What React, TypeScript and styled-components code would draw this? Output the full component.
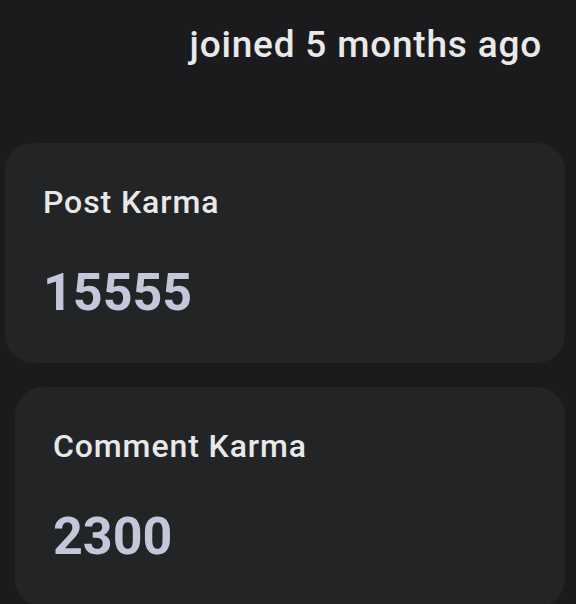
import styled, { createGlobalStyle } from "styled-components"

const GlobalStyle = createGlobalStyle`
  html, body {
    margin: 0;
    padding: 0;
    background: #1b1b1d;
    font-family: Roboto, "Noto Sans", sans-serif;
  }
`

const Page = styled.div`
  width: 576px;
  height: 604px;
  overflow: hidden;
  background: #1b1b1d;
  padding-top: 23px;
  box-sizing: border-box;
`

const Joined = styled.div`
  text-align: right;
  padding-right: 34px;
  font-size: 37px;
  line-height: 44px;
  font-weight: 500;
  letter-spacing: 0.8px;
  color: #e9e9ea;
`

const Cards = styled.div`
  display: flex;
  flex-direction: column;
  gap: 24px;
  margin-top: 76px;
`

const Card = styled.div<{ $indent: number }>`
  margin-left: ${(p) => p.$indent}px;
  margin-right: 11px;
  height: 220px;
  box-sizing: border-box;
  background: #232426;
  border-radius: 28px;
  padding: 40px 38px 0;
  display: flex;
  flex-direction: column;
  gap: 42px;
`

const Label = styled.div`
  font-size: 32px;
  line-height: 38px;
  font-weight: 500;
  letter-spacing: 0.9px;
  color: #e8e8e9;
`

const Value = styled.div`
  font-size: 52px;
  line-height: 60px;
  font-weight: 700;
  color: #c3c7d9;
`

const stats = [
  { label: "Post Karma", value: "15555", indent: 5 },
  { label: "Comment Karma", value: "2300", indent: 15 },
]

const App = () => {
  return (
    <Page>
      <GlobalStyle />
      <Joined>joined 5 months ago</Joined>
      <Cards>
        {stats.map((s) => (
          <Card key={s.label} $indent={s.indent}>
            <Label>{s.label}</Label>
            <Value>{s.value}</Value>
          </Card>
        ))}
      </Cards>
    </Page>
  )
}
export default App
